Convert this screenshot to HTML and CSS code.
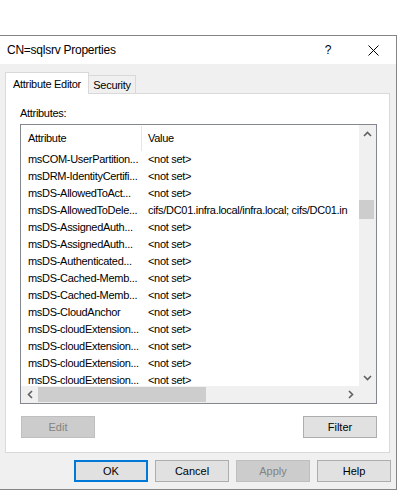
FILE: index.html
```html
<!DOCTYPE html>
<html>
<head>
<meta charset="utf-8">
<link rel="stylesheet" href="styles.css">
</head>
<body>
<div class="window">
  <div class="titlebar">
    <span class="title">CN=sqlsrv Properties</span>
    <span class="cap-btn cap-help">?</span>
    <span class="cap-btn cap-close"><svg width="11" height="11" viewBox="0 0 11 11"><path d="M0.5 0.5 L10.5 10.5 M10.5 0.5 L0.5 10.5" stroke="#000" stroke-width="1" fill="none"/></svg></span>
  </div>
  <div class="body">
    <div class="tabs">
      <div class="tab tab-active">Attribute Editor</div>
      <div class="tab tab-inactive">Security</div>
    </div>
    <div class="panel">
      <div class="label">Attributes:</div>
      <div class="listbox">
        <div class="lv-main">
          <div class="lv-content">
            <div class="lv-header">
              <div class="c1">Attribute</div>
              <div class="c2">Value</div>
            </div>
            <div class="row"><div class="c1">msCOM-UserPartition...</div><div class="c2">&lt;not set&gt;</div></div>
            <div class="row"><div class="c1">msDRM-IdentityCertifi...</div><div class="c2">&lt;not set&gt;</div></div>
            <div class="row"><div class="c1">msDS-AllowedToAct...</div><div class="c2">&lt;not set&gt;</div></div>
            <div class="row"><div class="c1">msDS-AllowedToDele...</div><div class="c2">cifs/DC01.infra.local/infra.local; cifs/DC01.in</div></div>
            <div class="row"><div class="c1">msDS-AssignedAuth...</div><div class="c2">&lt;not set&gt;</div></div>
            <div class="row"><div class="c1">msDS-AssignedAuth...</div><div class="c2">&lt;not set&gt;</div></div>
            <div class="row"><div class="c1">msDS-Authenticated...</div><div class="c2">&lt;not set&gt;</div></div>
            <div class="row"><div class="c1">msDS-Cached-Memb...</div><div class="c2">&lt;not set&gt;</div></div>
            <div class="row"><div class="c1">msDS-Cached-Memb...</div><div class="c2">&lt;not set&gt;</div></div>
            <div class="row"><div class="c1">msDS-CloudAnchor</div><div class="c2">&lt;not set&gt;</div></div>
            <div class="row"><div class="c1">msDS-cloudExtension...</div><div class="c2">&lt;not set&gt;</div></div>
            <div class="row"><div class="c1">msDS-cloudExtension...</div><div class="c2">&lt;not set&gt;</div></div>
            <div class="row"><div class="c1">msDS-cloudExtension...</div><div class="c2">&lt;not set&gt;</div></div>
            <div class="row"><div class="c1">msDS-cloudExtension...</div><div class="c2">&lt;not set&gt;</div></div>
          </div>
          <div class="vscroll">
            <div class="sb-btn"><svg width="9" height="6" viewBox="0 0 9 6"><path d="M1 5 L4.5 1.5 L8 5" stroke="#606060" stroke-width="1.6" fill="none"/></svg></div>
            <div class="vtrack"><div class="vthumb"></div></div>
            <div class="sb-btn"><svg width="9" height="6" viewBox="0 0 9 6"><path d="M1 1 L4.5 4.5 L8 1" stroke="#606060" stroke-width="1.6" fill="none"/></svg></div>
          </div>
        </div>
        <div class="hscroll-row">
          <div class="hscroll">
            <div class="sb-btn"><svg width="6" height="9" viewBox="0 0 6 9"><path d="M5 1 L1.5 4.5 L5 8" stroke="#606060" stroke-width="1.6" fill="none"/></svg></div>
            <div class="hthumb"></div>
            <div class="htrack"></div>
            <div class="sb-btn"><svg width="6" height="9" viewBox="0 0 6 9"><path d="M1 1 L4.5 4.5 L1 8" stroke="#606060" stroke-width="1.6" fill="none"/></svg></div>
          </div>
          <div class="corner"></div>
        </div>
      </div>
      <div class="panel-buttons">
        <div class="btn btn-disabled">Edit</div>
        <div class="btn">Filter</div>
      </div>
    </div>
    <div class="dialog-buttons">
      <div class="btn btn-default">OK</div>
      <div class="btn">Cancel</div>
      <div class="btn btn-disabled">Apply</div>
      <div class="btn">Help</div>
    </div>
  </div>
</div>
</body>
</html>
```
FILE: styles.css
```css
* { box-sizing: border-box; }
html, body { margin: 0; padding: 0; background: #fff; }
body {
  font-family: "Liberation Sans", Arial, sans-serif;
  font-size: 11px;
  letter-spacing: -0.3px;
  color: #000;
  width: 405px;
  height: 496px;
  overflow: hidden;
}
.window {
  margin: 35px 0 0 -1px;
  width: 398px;
  height: 455px;
  border: 1px solid #858585;
  display: flex;
  flex-direction: column;
}
.titlebar {
  height: 28px;
  flex: none;
  background: #fff;
  display: flex;
  align-items: center;
  padding-left: 7px;
}
.title { flex: 1; font-size: 12px; letter-spacing: -0.25px; }
.cap-btn { height: 28px; display: flex; align-items: center; justify-content: center; }
.cap-help { width: 46px; font-size: 12px; letter-spacing: 0; }
.cap-close { width: 45px; }
.body {
  flex: 1;
  background: #f0f0f0;
  padding: 8px 6px 7px 5px;
  display: flex;
  flex-direction: column;
}
.tabs { display: flex; align-items: flex-end; height: 21px; flex: none; }
.tab {
  border: 1px solid #d9d9d9;
  border-bottom: none;
  display: flex;
  align-items: center;
  justify-content: center;
}
.tab-active {
  width: 84px;
  height: 22px;
  background: #fff;
  margin-bottom: -1px;
  position: relative;
  z-index: 1;
}
.tab-inactive { width: 47px; height: 18px; background: #f0f0f0; border-left: none; padding-top: 1px; }
.panel {
  height: 360px;
  flex: none;
  background: #fff;
  border: 1px solid #d9d9d9;
  padding: 13px 12px 14px 14px;
  display: flex;
  flex-direction: column;
}
.label { line-height: 13px; height: 13px; margin-bottom: 4px; }
.listbox {
  width: 357px;
  height: 280px;
  border: 1px solid #828790;
  display: flex;
  flex-direction: column;
  background: #fff;
}
.lv-main { height: 261px; display: flex; }
.lv-content { width: 338px; overflow: hidden; }
.lv-header { height: 26px; line-height: 26px; display: flex; }
.c1 { width: 121px; flex: none; padding-left: 7px; white-space: nowrap; overflow: hidden; }
.c2 { padding-left: 6px; white-space: nowrap; }
.lv-header .c1 { border-right: 1px solid #e5e5e5; height: 25px; margin-top: 1px; line-height: 24px; }
.row { height: 17px; line-height: 17px; display: flex; }
.vscroll { width: 17px; background: #f0f0f0; display: flex; flex-direction: column; }
.sb-btn { width: 17px; height: 17px; flex: none; display: flex; align-items: center; justify-content: center; }
.vtrack { flex: 1; padding-top: 58px; }
.vthumb { height: 19px; margin-right: 2px; background: #cdcdcd; }
.hscroll-row { height: 17px; display: flex; }
.hscroll { width: 338px; background: #f0f0f0; display: flex; }
.hthumb { width: 168px; margin: 1px 0; background: #cdcdcd; }
.htrack { flex: 1; }
.corner { width: 17px; background: #f0f0f0; }
.panel-buttons {
  margin-top: 12px;
  margin-left: 1px;
  width: 356px;
  display: flex;
  justify-content: space-between;
}
.btn {
  width: 74px;
  height: 22px;
  flex: none;
  border: 1px solid #adadad;
  background: #e1e1e1;
  display: flex;
  align-items: center;
  justify-content: center;
  letter-spacing: 0;
}
.btn-disabled { background: #cccccc; border-color: #bfbfbf; color: #838383; }
.btn-default { border: 2px solid #0078d7; }
.dialog-buttons {
  margin-top: 7px;
  margin-right: -1px;
  display: flex;
  justify-content: flex-end;
  gap: 7px;
}
```
